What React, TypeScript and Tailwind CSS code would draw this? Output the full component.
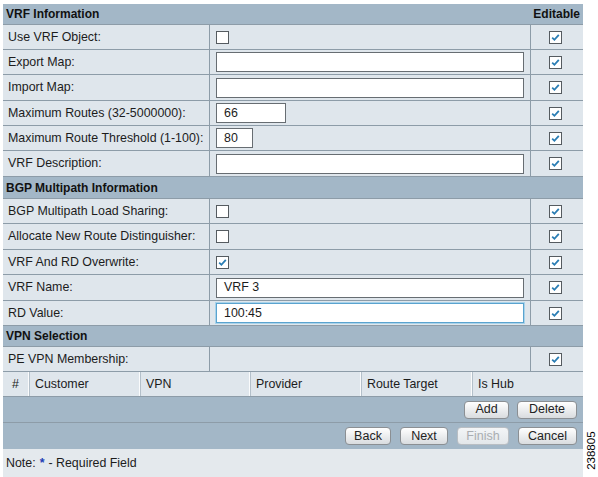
import React from 'react';

type Row =
  | { kind: 'check'; label: string; checked?: boolean; h: number }
  | { kind: 'input'; label: string; value?: string; w?: string; focus?: boolean; h: number }
  | { kind: 'empty'; label: string; h: number };

const vrfRows: Row[] = [
  { kind: 'check', label: 'Use VRF Object:', h: 25 },
  { kind: 'input', label: 'Export Map:', h: 25 },
  { kind: 'input', label: 'Import Map:', h: 26 },
  { kind: 'input', label: 'Maximum Routes (32-5000000):', value: '66', w: 'w-[70px]', h: 25 },
  { kind: 'input', label: 'Maximum Route Threshold (1-100):', value: '80', w: 'w-[37px]', h: 25 },
  { kind: 'input', label: 'VRF Description:', h: 26 },
];

const bgpRows: Row[] = [
  { kind: 'check', label: 'BGP Multipath Load Sharing:', h: 25 },
  { kind: 'check', label: 'Allocate New Route Distinguisher:', h: 26 },
  { kind: 'check', label: 'VRF And RD Overwrite:', checked: true, h: 25 },
  { kind: 'input', label: 'VRF Name:', value: 'VRF 3', h: 26 },
  { kind: 'input', label: 'RD Value:', value: '100:45', focus: true, h: 25 },
];

function CheckBox({ checked }: { checked?: boolean }) {
  return (
    <span className="inline-flex w-[13px] h-[13px] border border-[#555b60] bg-white items-center justify-center">
      {checked && (
        <svg width="9" height="9" viewBox="0 0 9 9">
          <path d="M1.2 4.6 L3.4 6.8 L7.8 1.8" fill="none" stroke="#2a7db4" strokeWidth="1.8" />
        </svg>
      )}
    </span>
  );
}

function SectionHeader({ title, editable, h }: { title: string; editable?: boolean; h: string }) {
  return (
    <div
      className={`${h} bg-[#a3b7c7] border-b border-[#8d9ca8] flex items-center justify-between px-[3px] font-bold text-[12px] text-[#111]`}
    >
      <span>{title}</span>
      {editable && <span>Editable</span>}
    </div>
  );
}

function FormRow({ row }: { row: Row }) {
  return (
    <div
      className="grid grid-cols-[207px_321px_52px] border-b border-[#8d9ca8]"
      style={{ height: row.h }}
    >
      <div className="border-r border-[#8d9ca8] flex items-center pl-[5px]">{row.label}</div>
      <div className="border-r border-[#8d9ca8] flex items-center pl-[6px]">
        {row.kind === 'check' && <CheckBox checked={row.checked} />}
        {row.kind === 'input' && (
          <div
            className={`${row.w ?? 'w-[308px]'} h-[20px] bg-white border flex items-center px-[7px] ${
              row.focus ? 'border-[#5aa3cf] shadow-[0_0_0_1px_#a9d3ea]' : 'border-[#676d72]'
            }`}
          >
            {row.value}
          </div>
        )}
      </div>
      <div className="flex items-center justify-center pr-[3px]">
        <CheckBox checked />
      </div>
    </div>
  );
}

function Btn({ label, w, disabled }: { label: string; w: string; disabled?: boolean }) {
  return (
    <button
      className={`${w} h-[18px] rounded-[4px] border text-[12.5px] leading-none bg-gradient-to-b ${
        disabled
          ? 'border-[#b9bec3] text-[#a9adb1] from-[#f3f5f7] to-[#e3e7ea]'
          : 'border-[#8b8f93] text-[#222] from-white to-[#d9dcdf]'
      }`}
    >
      {label}
    </button>
  );
}

export default function App() {
  const cols = [
    { label: '#', w: 'w-[26px]', center: true },
    { label: 'Customer', w: 'w-[111px]' },
    { label: 'VPN', w: 'w-[110px]' },
    { label: 'Provider', w: 'w-[111px]' },
    { label: 'Route Target', w: 'w-[111px]' },
    { label: 'Is Hub', w: 'flex-1' },
  ];

  return (
    <div
      className="relative w-[598px] h-[477px] bg-white text-[12.4px] text-[#1c1c1c]"
      style={{ fontFamily: '"Liberation Sans", Arial, sans-serif' }}
    >
      <div className="ml-[3px] pt-[4px] w-[580px] h-full">
        <div className="bg-[#dfe6ec]">
          <SectionHeader title="VRF Information" editable h="h-[21px]" />
          {vrfRows.map((r) => (
            <FormRow key={r.label} row={r} />
          ))}
          <SectionHeader title="BGP Multipath Information" h="h-[22px]" />
          {bgpRows.map((r) => (
            <FormRow key={r.label} row={r} />
          ))}
          <SectionHeader title="VPN Selection" h="h-[21px]" />
          <FormRow row={{ kind: 'empty', label: 'PE VPN Membership:', h: 25 }} />

          <div className="flex h-[25px] border-b border-[#8d9ca8]">
            {cols.map((c, i) => (
              <div
                key={c.label}
                className={`${c.w} flex items-center ${c.center ? 'justify-center' : 'pl-[6px]'} ${
                  i < cols.length - 1 ? 'border-r border-[#fafbfc] shadow-[1px_0_0_#b4c0ca]' : ''
                }`}
              >
                {c.label}
              </div>
            ))}
          </div>

          <div className="h-[26px] bg-[#a3b7c7] border-b border-[#8d9ca8] flex items-center justify-end gap-[8px] pr-[6px]">
            <Btn label="Add" w="w-[45px]" />
            <Btn label="Delete" w="w-[60px]" />
          </div>
          <div className="h-[26px] bg-[#a3b7c7] flex items-center justify-end gap-[9px] pr-[6px]">
            <Btn label="Back" w="w-[46px]" />
            <Btn label="Next" w="w-[48px]" />
            <Btn label="Finish" w="w-[52px]" disabled />
            <Btn label="Cancel" w="w-[59px]" />
          </div>
        </div>
        <div className="h-[28px] bg-[#e4e9ed] flex items-center pl-[3px]">
          Note:<span className="text-[#1f3fb4] font-bold mx-[4px]">*</span>- Required Field
        </div>
      </div>

      <div className="absolute right-[0px] bottom-[2px] w-[13px] h-[48px] flex items-center justify-center">
        <span className="-rotate-90 whitespace-nowrap text-[11.5px] text-black">238805</span>
      </div>
    </div>
  );
}
